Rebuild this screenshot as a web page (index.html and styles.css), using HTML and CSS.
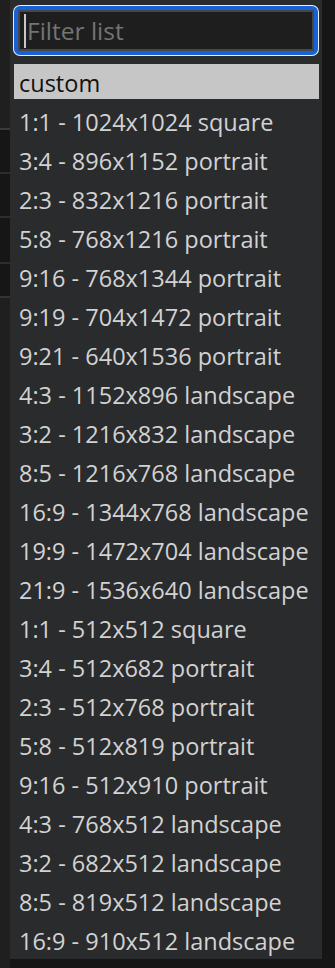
FILE: index.html
```html
<!DOCTYPE html>
<html>
<head>
<meta charset="utf-8">
<link rel="stylesheet" href="styles.css">
</head>
<body>
<div class="stage">
  <div class="popup">
    <div class="filter">
      <span class="caret"></span><span class="placeholder">Filter list</span>
    </div>
    <ul class="list">
      <li class="row active">custom</li>
      <li class="row">1:1 - 1024x1024 square</li>
      <li class="row">3:4 - 896x1152 portrait</li>
      <li class="row">2:3 - 832x1216 portrait</li>
      <li class="row">5:8 - 768x1216 portrait</li>
      <li class="row">9:16 - 768x1344 portrait</li>
      <li class="row">9:19 - 704x1472 portrait</li>
      <li class="row">9:21 - 640x1536 portrait</li>
      <li class="row">4:3 - 1152x896 landscape</li>
      <li class="row">3:2 - 1216x832 landscape</li>
      <li class="row">8:5 - 1216x768 landscape</li>
      <li class="row">16:9 - 1344x768 landscape</li>
      <li class="row">19:9 - 1472x704 landscape</li>
      <li class="row">21:9 - 1536x640 landscape</li>
      <li class="row">1:1 - 512x512 square</li>
      <li class="row">3:4 - 512x682 portrait</li>
      <li class="row">2:3 - 512x768 portrait</li>
      <li class="row">5:8 - 512x819 portrait</li>
      <li class="row">9:16 - 512x910 portrait</li>
      <li class="row">4:3 - 768x512 landscape</li>
      <li class="row">3:2 - 682x512 landscape</li>
      <li class="row">8:5 - 819x512 landscape</li>
      <li class="row">16:9 - 910x512 landscape</li>
    </ul>
  </div>
</div>
</body>
</html>
```
FILE: styles.css
```css
html, body {
  margin: 0;
  padding: 0;
  background: #171717;
  width: 335px;
  height: 968px;
  overflow: hidden;
}
.stage {
  width: 335px;
  height: 968px;
  background:
    linear-gradient(to bottom,
      transparent 0, transparent 128px, #3a3a3a 128px, #3a3a3a 130px,
      #161616 130px, #161616 172px, #2e2e2e 172px, #2e2e2e 174px,
      #161616 174px, #161616 216px, #2e2e2e 216px, #2e2e2e 218px,
      #161616 218px, #161616 262px, #2e2e2e 262px, #2e2e2e 264px,
      #161616 264px, #161616 296px, #333 296px, #333 298px,
      transparent 298px) left top / 10px 100% no-repeat,
    linear-gradient(to right, #1f1f1f 0, #1f1f1f 10px, transparent 10px),
    #161616;
}
.popup {
  margin-left: 10px;
  width: 312px;
  height: 959px;
  background: #2a2b2d;
  box-sizing: border-box;
  padding: 6px 4px 0 4px;
  font-family: "Open Sans", "Noto Sans", sans-serif;
  font-size: 23.5px;
  color: #d2d2d2;
}
.filter {
  height: 49px;
  box-sizing: border-box;
  border: 4px solid #1763d6;
  border-radius: 6px;
  background: #1e1e1e;
  box-shadow: 0 0 0 1px #e9eef5, inset 0 0 0 2px #474747;
  display: flex;
  align-items: center;
  padding-left: 6px;
  width: 304px;
}
.caret {
  width: 2px;
  height: 34px;
  background: #c8c8c8;
  margin-right: 1px;
}
.placeholder {
  color: #747474;
  font-size: 24.5px;
  line-height: 1;
  padding-top: 1px;
}
.list {
  list-style: none;
  margin: 9px 0 0 0;
  padding: 0;
}
.row {
  height: 35px;
  margin-bottom: 4px;
  display: flex;
  align-items: center;
  padding-left: 5px;
  padding-top: 2px;
  white-space: nowrap;
  width: 305px;
  box-sizing: border-box;
}
.row.active {
  background: #c6c6c6;
  color: #111;
}
```
